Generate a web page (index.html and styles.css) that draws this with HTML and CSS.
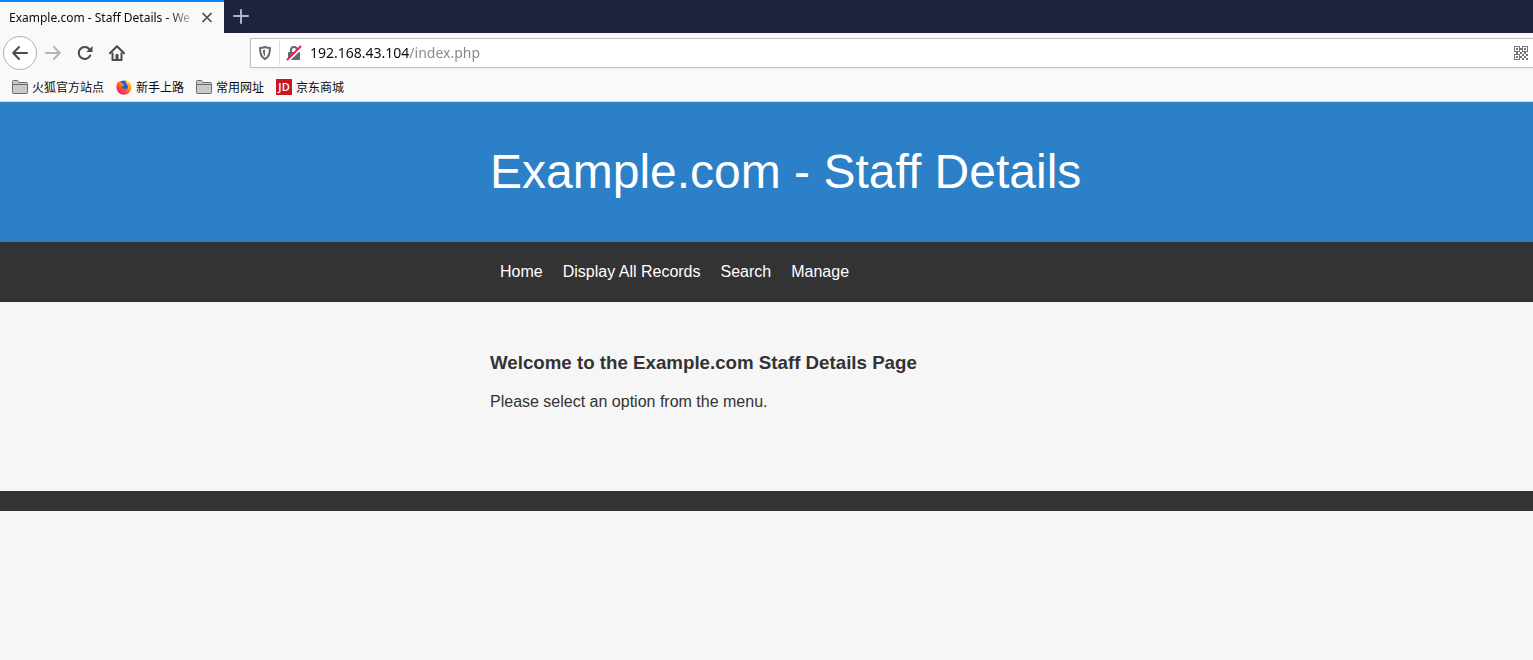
FILE: index.html
```html
<!DOCTYPE html>
<html lang="en">
<head>
<meta charset="utf-8">
<title>Example.com - Staff Details</title>
<meta name="viewport" content="width=device-width, initial-scale=1">
<link rel="stylesheet" href="styles.css">
</head>
<body>
<div class="tabbar">
  <div class="tab">
    <span class="tab-title">Example.com - Staff Details - We</span>
    <button class="tab-close" aria-label="Close tab"><svg width="12" height="12" viewBox="0 0 12 12"><path d="M1.500 1l9 9M10.500 1l-9 9" stroke="#4a4a4f" stroke-width="1.700" fill="none"/></svg></button>
  </div>
  <button class="new-tab" aria-label="New tab"><svg width="16" height="16" viewBox="0 0 16 16"><path d="M8 1v13M1 7h14" stroke="#b4b4c0" stroke-width="2" fill="none" stroke-linecap="round"/></svg></button>
</div>
<div class="toolbar">
  <div class="tools">
    <button class="tool tool-back" aria-label="Back"><svg width="16" height="16" viewBox="0 0 16 16"><path d="M15 8H1.500M7 2L1.200 8L7 14" stroke="#4a4a4f" stroke-width="2" fill="none" stroke-linecap="round" stroke-linejoin="round"/></svg></button>
    <button class="tool" aria-label="Forward" disabled><svg width="16" height="16" viewBox="0 0 16 16"><path d="M1 8h13.500M9 2l5.800 6L9 14" stroke="#b4b4b7" stroke-width="2" fill="none" stroke-linecap="round" stroke-linejoin="round"/></svg></button>
    <button class="tool" aria-label="Reload"><svg width="16" height="16" viewBox="0 0 16 16"><path d="M13.200 10.500A6 6 0 1 1 12.300 4" stroke="#4a4a4f" stroke-width="2" fill="none" stroke-linecap="round"/><path d="M15.500 1v5.500a.6.600 0 0 1-.6.600H9.300z" fill="#4a4a4f"/></svg></button>
    <button class="tool" aria-label="Home"><svg width="16" height="16" viewBox="0 0 16 16"><path d="M1 8.300L8 1.300l7 7" stroke="#4a4a4f" stroke-width="2" fill="none" stroke-linecap="round" stroke-linejoin="round"/><path d="M3.500 7.500V15h9V7.500" stroke="#4a4a4f" stroke-width="2" fill="none" stroke-linejoin="round"/><path d="M6.500 15v-5a1 1 0 0 1 1-1h1a1 1 0 0 1 1 1v5z" fill="#4a4a4f"/></svg></button>
  </div>
  <div class="urlbar">
    <svg class="shield" width="16" height="16" viewBox="0 0 16 16"><path d="M8 2c1.800.6 3.500.9 5 1 0 5.300-1 9-5 11C4 12 3 8.300 3 3c1.500-.1 3.200-.4 5-1z" fill="none" stroke="#68686c" stroke-width="2" stroke-linejoin="round"/><path d="M8 4.600v6.800c-1.600-1.300-2-3.500-2.200-6.100z" fill="#68686c"/></svg>
    <svg class="lock" width="16" height="16" viewBox="0 0 16 16"><path d="M5 8V5a3 3 0 0 1 6 0v3" fill="none" stroke="#68686c" stroke-width="2"/><rect x="2" y="7" width="12" height="8" rx="1" fill="#68686c"/><path d="M2.300 16L16 2.300" stroke="#fff" stroke-width="2"/><path d="M1.500 14.500L14.500 1.500" stroke="#ff1a4d" stroke-width="2" stroke-linecap="round"/></svg>
    <input class="url" type="text" aria-label="Address" value="192.168.43.104/index.php" spellcheck="false">
    <button class="qr" aria-label="QR code"><svg width="14" height="14" viewBox="0 0 14 14" shape-rendering="crispEdges"><path fill="none" stroke="#6f7680" d="M.5.5h5v5h-5zM8.500.5h5v5h-5zM.5 8.500h5v5h-5z"/><path fill="#6f7680" d="M2 2h2v2H2zM10 2h2v2h-2zM2 10h2v2H2zM6 2h2v2H6zM6 6h2v2H6zM8 8h2v2H8zM12 8h2v2h-2zM10 10h2v2h-2zM8 12h2v2H8zM12 12h2v2h-2zM10 6h2v2h-2zM2 6h2v2H2zM6 10h2v2H6z"/></svg></button>
  </div>
</div>
<nav class="bookmarks" aria-label="Bookmarks">
  <a class="bookmark" href="#"><svg width="16" height="16" viewBox="0 0 16 16"><path d="M.5 13.500v-11a1 1 0 0 1 1-1h4l1.500 2h7.500a1 1 0 0 1 1 1v9a1 1 0 0 1-1 1h-13a1 1 0 0 1-1-1z" fill="#cacacc" stroke="#6b6b6e"/><path d="M1 5.500h14" stroke="#6b6b6e"/></svg>火狐官方站点</a>
  <a class="bookmark" href="#"><svg width="16" height="16" viewBox="0 0 16 16"><defs><linearGradient id="flame" x1="1" y1="0" x2="0.200" y2="1"><stop offset="0" stop-color="#fff14a"/><stop offset=".4" stop-color="#ffa01e"/><stop offset=".7" stop-color="#ff4a35"/><stop offset="1" stop-color="#e31587"/></linearGradient></defs><circle cx="7.500" cy="7" r="5.500" fill="#1b5fcb"/><path d="M9 .3c1.300.8 2 1.700 2.500 2.700l1.200-.2c1.800 1.200 3 3.300 2.800 6A7.400 7.400 0 0 1 8 15.800 7.400 7.400 0 0 1 .4 8.500C.4 6 1.200 3.500 2.500 2l.7 1.600C4.300 3 5.300 3.200 6.300 4L7 5.200l1.300.6-.6 1.200-1.700.8c.2 2 2 2.700 3.500 1.700l1.300.3c-1 1.200-2 1.600-3.300 1.600 2 .6 4-.8 4.300-2.700.3-2-.6-3.300-2-4.500C10 3 9 2 9 .3z" fill="url(#flame)"/></svg>新手上路</a>
  <a class="bookmark" href="#"><svg width="16" height="16" viewBox="0 0 16 16"><path d="M.5 13.500v-11a1 1 0 0 1 1-1h4l1.500 2h7.500a1 1 0 0 1 1 1v9a1 1 0 0 1-1 1h-13a1 1 0 0 1-1-1z" fill="#cacacc" stroke="#6b6b6e"/><path d="M1 5.500h14" stroke="#6b6b6e"/></svg>常用网址</a>
  <a class="bookmark" href="#"><span class="jd" aria-hidden="true">JD</span>京东商城</a>
</nav>
<header class="banner"><h1 class="banner-title">Example.com - Staff Details</h1></header>
<nav class="menu" aria-label="Main">
  <a class="menu-link" href="#">Home</a>
  <a class="menu-link" href="#">Display All Records</a>
  <a class="menu-link" href="#">Search</a>
  <a class="menu-link" href="#">Manage</a>
</nav>
<main class="content">
  <h3 class="content-title">Welcome to the Example.com Staff Details Page</h3>
  <p class="content-text">Please select an option from the menu.</p>
</main>
<footer class="footer"></footer>
</body>
</html>
```
FILE: styles.css
```css
* { box-sizing: border-box; }

:root {
  --gutter: min(490px, 32%);
  --ui: "Noto Sans", "Noto Sans CJK SC", sans-serif;
}

body {
  margin: 0;
  min-height: 100vh;
  background: #f6f6f6;
  color: #333;
  font: 16px/18px "Liberation Sans", Arial, sans-serif;
}

button {
  padding: 0;
  border: 0;
  background: none;
  display: flex;
  align-items: center;
  justify-content: center;
}

svg { display: block; flex: none; }

.tabbar {
  display: flex;
  height: 33px;
  background: #202340;
}

.tab {
  display: flex;
  align-items: center;
  width: 224px;
  padding: 0 11px 0 9px;
  border-top: 2px solid #0a84ff;
  background: #f9f9fa;
}

.tab-title {
  flex: 1;
  overflow: hidden;
  white-space: nowrap;
  color: #0c0c0d;
  font: 12px/16px var(--ui);
  mask-image: linear-gradient(to left, transparent, #000 28px);
}

.tab-close { width: 12px; margin-left: 4px; }

.new-tab { width: 34px; }

.toolbar {
  display: flex;
  align-items: center;
  height: 40px;
  background: #f9f9fa;
}

.tools {
  display: flex;
  align-items: center;
  flex: none;
  width: 250px;
  padding-left: 3px;
}

.tool { width: 32px; height: 34px; }

.tool-back {
  width: 34px;
  border: 1px solid #b1b1b3;
  border-radius: 50%;
  background: #fff;
}

.urlbar {
  display: flex;
  align-items: center;
  flex: 1;
  height: 30px;
  padding: 0 5px 0 6px;
  border: 1px solid #bebebf;
  border-right: 0;
  border-radius: 2px 0 0 2px;
  background: #fff;
  box-shadow: 0 1px 4px rgba(0, 0, 0, 0.06);
}

.lock {
  box-sizing: content-box;
  margin-left: 6px;
  padding: 4px 0 4px 6px;
  border-left: 1px solid #dcdcdd;
}

.url {
  flex: 1;
  min-width: 0;
  margin-left: 8px;
  padding: 0;
  border: 0;
  outline: 0;
  background: linear-gradient(90deg, #0c0c0d 99px, #858588 99px);
  background-clip: text;
  color: transparent;
  caret-color: #0c0c0d;
  font: 14px/20px var(--ui);
}

.bookmarks {
  display: flex;
  align-items: center;
  gap: 12px;
  height: 29px;
  padding-left: 12px;
  border-bottom: 1px solid #d5d9dc;
  background: #f9f9fa;
}

.bookmark {
  display: flex;
  align-items: center;
  gap: 4px;
  color: #0c0c0d;
  font: 12px/16px "Noto Sans CJK SC", sans-serif;
  text-decoration: none;
  white-space: nowrap;
}

.jd {
  width: 16px;
  height: 16px;
  background: #c81623;
  color: #fff;
  font: 600 11px/16px "Open Sans", sans-serif;
  text-align: center;
}

.banner {
  padding: 40px 0 40px var(--gutter);
  background: #2c80c8;
}

.banner-title {
  margin: 0;
  color: #fff;
  font-size: 48px;
  font-weight: 400;
  line-height: 60px;
}

.menu {
  display: flex;
  flex-wrap: wrap;
  padding: 10px 0 10px var(--gutter);
  background: #333;
}

.menu-link {
  padding: 0 10px;
  color: #fff;
  line-height: 40px;
  text-decoration: none;
}

.content { padding: 50px 0 80px var(--gutter); }

.content-title {
  margin: 0;
  line-height: 22px;
}

.content-text { margin: 19px 0 0; }

.footer { height: 20px; background: #333; }
```
